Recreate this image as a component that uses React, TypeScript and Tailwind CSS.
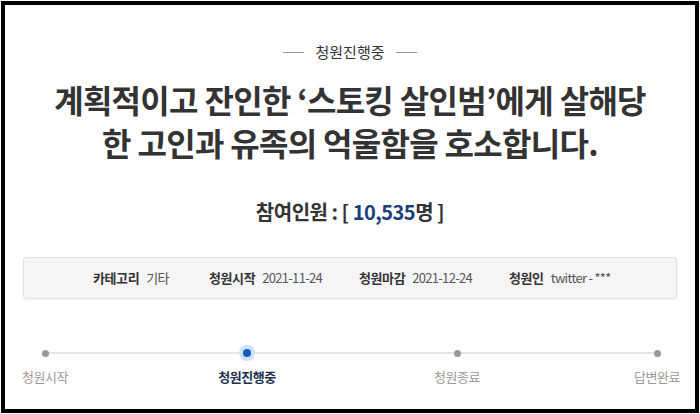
const font = { fontFamily: '"Noto Sans CJK KR", "Noto Sans", sans-serif' }

const steps = [
  { label: "청원시작", active: false, gap: "" },
  { label: "청원진행중", active: true, gap: "ml-[158px]" },
  { label: "청원종료", active: false, gap: "ml-[166px]" },
  { label: "답변완료", active: false, gap: "ml-[156px]" },
]

function InfoItem({ name, value, width }: { name: string; value: string; width: string }) {
  return (
    <div className={"flex items-center gap-[7px] " + width}>
      <span className="font-bold text-[#333]">{name}</span>
      <span className="text-[#555] tracking-[-0.7px]">{value}</span>
    </div>
  )
}

export default function App() {
  return (
    <div className="w-[700px] h-[414px] bg-white p-px" style={font}>
      <div className="h-full border-[4px] border-black bg-white px-[18px] pt-[36px] flex flex-col">
        {/* status badge */}
        <div className="flex items-center justify-center gap-[11px] text-[15px] leading-[22px] text-[#333]">
          <span className="w-[21px] h-px bg-[#999]" />
          <span>청원진행중</span>
          <span className="w-[21px] h-px bg-[#999]" />
        </div>

        <h1 className="mt-[15px] text-center text-[32px] leading-[43px] font-bold text-[#333] tracking-[-0.7px]">
          계획적이고 잔인한 ‘스토킹 살인범’에게 살해당
          <br />
          한 고인과 유족의 억울함을 호소합니다.
        </h1>

        <div className="mt-[34px] text-center text-[20px] leading-[28px] font-bold text-[#333] tracking-[-0.5px]">
          참여인원 : [ <span className="text-[#1c3f79]">10,535</span>명 ]
        </div>

        <div className="mt-[31px] h-[42px] rounded-[3px] border border-[#e2e2e2] bg-[#f5f5f5] shadow-[0_1px_2px_rgba(0,0,0,0.06)] flex items-center pl-[69px] text-[13px] tracking-[-0.4px]">
          <InfoItem name="카테고리" value="기타" width="w-[116px]" />
          <InfoItem name="청원시작" value="2021-11-24" width="w-[150px]" />
          <InfoItem name="청원마감" value="2021-12-24" width="w-[150px]" />
          <InfoItem name="청원인" value="twitter - ***" width="" />
        </div>

        {/* progress timeline */}
        <div className="mt-[46px] relative">
          <div className="absolute left-[22px] right-[22px] top-[7px] h-[2px] bg-[#e6e6e6]" />
          <div className="relative flex">
            {steps.map((s) => (
              <div key={s.label} className={"w-[44px] flex flex-col items-center " + s.gap}>
                <div className="h-[16px] flex items-center justify-center">
                  {s.active ? (
                    <span className="w-[16px] h-[16px] rounded-full bg-[#cfe2fb] flex items-center justify-center">
                      <span className="w-[8px] h-[8px] rounded-full bg-[#1b5bb8]" />
                    </span>
                  ) : (
                    <span className="w-[7px] h-[7px] rounded-full bg-[#999]" />
                  )}
                </div>
                <span
                  className={
                    "mt-[7px] whitespace-nowrap text-[13px] leading-[18px] tracking-[-0.5px] " +
                    (s.active ? "font-bold text-[#1e2f4f]" : "text-[#9a9a9a]")
                  }
                >
                  {s.label}
                </span>
              </div>
            ))}
          </div>
        </div>
      </div>
    </div>
  )
}
